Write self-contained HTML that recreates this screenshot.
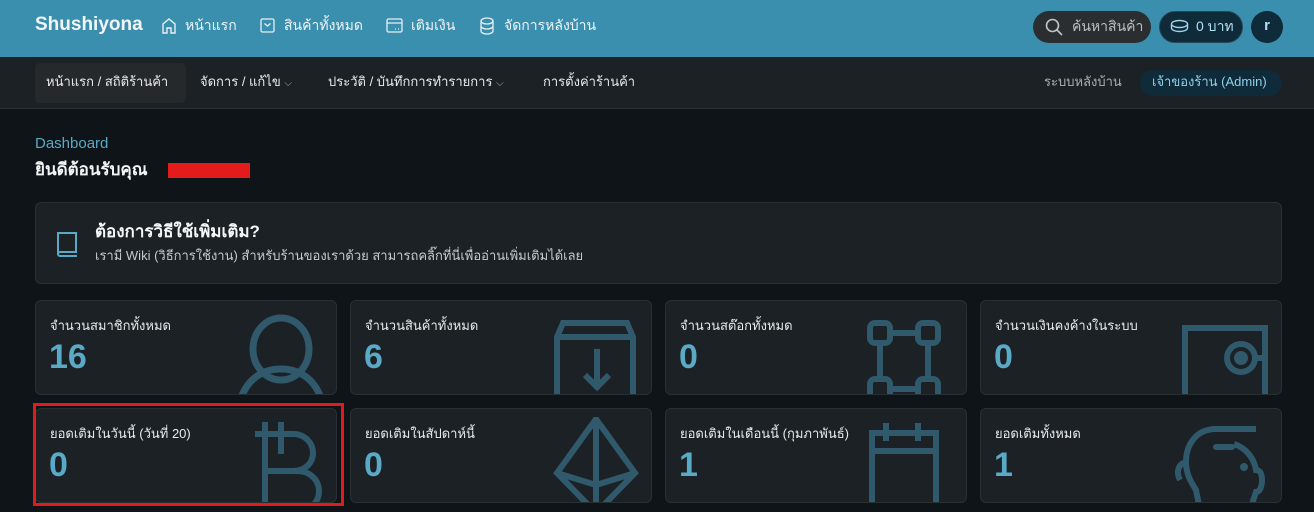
<!DOCTYPE html>
<html><head><meta charset="utf-8"><style>
*{box-sizing:border-box;margin:0;padding:0}
body{width:1314px;height:512px;overflow:hidden;background:#0e1417;font-family:"Liberation Sans","Noto Sans CJK SC",sans-serif;color:#e6e9ea;position:relative;line-height:20px}
.top{position:absolute;left:0;top:0;width:1314px;height:57px;background:#3a8fae}
.abs{position:absolute;white-space:nowrap;line-height:20px}
.nav2{position:absolute;left:0;top:57px;width:1314px;height:52px;background:#1b2124;border-bottom:1px solid #2a3134}
.card{position:absolute;background:#1b2124;border:1px solid #283034;border-radius:6px;overflow:hidden}
.lbl{position:absolute;left:14px;top:15px;font-size:13px;line-height:20px;color:#e8eaeb;white-space:nowrap}
.num{position:absolute;left:13px;top:38px;font-size:34px;line-height:36px;font-weight:bold;color:#5aa9c6}
.ic{position:absolute}
</style></head><body>
<div class="top"></div>
<div class="abs" style="left:35px;top:15px;font-size:19px;font-weight:bold;color:#f2f6f8">Shushiyona</div>
<svg class="abs" style="left:161px;top:17px" width="16" height="18" viewBox="0 0 16 18" fill="none" stroke="#e8f0f3" stroke-width="1.4"><path d="M2 16V7l6-5 6 5v9H10v-5H6v5z"/></svg>
<div class="abs" style="left:185px;top:15px;font-size:14px;color:#eef4f6">หน้าแรก</div>
<svg class="abs" style="left:260px;top:18px" width="15" height="15" viewBox="0 0 15 15" fill="none" stroke="#e8f0f3" stroke-width="1.3"><rect x="1" y="1" width="13" height="13" rx="1.5"/><path d="M4.5 5.5l3 2.5 3-2.5"/></svg>
<div class="abs" style="left:284px;top:15px;font-size:14px;color:#eef4f6">สินค้าทั้งหมด</div>
<svg class="abs" style="left:386px;top:18px" width="17" height="15" viewBox="0 0 17 15" fill="none" stroke="#e8f0f3" stroke-width="1.3"><rect x="1" y="1" width="15" height="13" rx="1.5"/><path d="M1 5h15M9 11h1M12 11h1"/></svg>
<div class="abs" style="left:411px;top:15px;font-size:14px;color:#eef4f6">เติมเงิน</div>
<svg class="abs" style="left:480px;top:17px" width="14" height="18" viewBox="0 0 14 18" fill="none" stroke="#e8f0f3" stroke-width="1.3"><ellipse cx="7" cy="4" rx="6" ry="3"/><path d="M1 4v10c0 1.7 2.7 3 6 3s6-1.3 6-3V4M1 9c0 1.7 2.7 3 6 3s6-1.3 6-3"/></svg>
<div class="abs" style="left:504px;top:15px;font-size:14px;color:#eef4f6">จัดการหลังบ้าน</div>
<div class="abs" style="left:1033px;top:11px;width:118px;height:32px;border-radius:16px;background:#2a2e30"></div>
<svg class="abs" style="left:1045px;top:18px" width="18" height="18" viewBox="0 0 18 18" fill="none" stroke="#bfc6c9" stroke-width="1.6"><circle cx="7.5" cy="7.5" r="6"/><path d="M12 12l5 5"/></svg>
<div class="abs" style="left:1072px;top:16px;font-size:14px;color:#b9c0c3">ค้นหาสินค้า</div>
<div class="abs" style="left:1159px;top:11px;width:84px;height:32px;border-radius:16px;background:#0f2a38;border:1px solid #22485a"></div>
<svg class="abs" style="left:1170px;top:19px" width="19" height="14" viewBox="0 0 19 14" fill="none" stroke="#9fd3e8" stroke-width="1.4"><ellipse cx="9.5" cy="5" rx="8" ry="3.5"/><path d="M1.5 5v4c0 2 3.6 3.5 8 3.5s8-1.5 8-3.5V5"/></svg>
<div class="abs" style="left:1196px;top:16px;font-size:14px;color:#aee0f3">0 บาท</div>
<div class="abs" style="left:1251px;top:11px;width:32px;height:32px;border-radius:50%;background:#0f2a38;color:#aee0f3;font-size:15px;font-weight:bold;text-align:center;line-height:30px">r</div>

<div class="nav2"></div>
<div class="abs" style="left:35px;top:63px;width:151px;height:40px;border-radius:5px;background:#26292b"></div>
<div class="abs" style="left:46px;top:72px;font-size:13px;color:#e8eaeb">หน้าแรก / สถิติร้านค้า</div>
<div class="abs" style="left:200px;top:72px;font-size:13px;color:#e8eaeb">จัดการ / แก้ไข <span style="color:#aaa;font-size:10px">⌵</span></div>
<div class="abs" style="left:328px;top:72px;font-size:13px;color:#e8eaeb">ประวัติ / บันทึกการทำรายการ <span style="color:#aaa;font-size:10px">⌵</span></div>
<div class="abs" style="left:543px;top:72px;font-size:13px;color:#e8eaeb">การตั้งค่าร้านค้า</div>
<div class="abs" style="left:1044px;top:72px;font-size:13px;color:#aab0b3">ระบบหลังบ้าน</div>
<div class="abs" style="left:1140px;top:70px;width:142px;height:26px;border-radius:13px;background:#0f2a38"></div>
<div class="abs" style="left:1152px;top:72px;font-size:13px;color:#8fd0ea">เจ้าของร้าน (Admin)</div>

<div class="abs" style="left:35px;top:134px;font-size:15px;color:#5aa9c6">Dashboard</div>
<div class="abs" style="left:35px;top:160px;font-size:17px;font-weight:bold;color:#f2f4f5">ยินดีต้อนรับคุณ</div>
<div class="abs" style="left:168px;top:163px;width:82px;height:15px;background:#e31b1b"></div>

<div class="card" style="left:35px;top:202px;width:1247px;height:82px"></div>
<svg class="abs" style="left:56px;top:230px" width="22" height="27" viewBox="0 0 22 27" fill="none" stroke="#5aa9c6" stroke-width="2"><path d="M2 24V3h18v19H4a2 2 0 0 0 0 4h17"/></svg>
<div class="abs" style="left:95px;top:222px;font-size:17px;font-weight:bold;color:#f5f6f7">ต้องการวิธีใช้เพิ่มเติม?</div>
<div class="abs" style="left:95px;top:246px;font-size:13px;color:#c5cacc">เรามี Wiki (วิธีการใช้งาน) สำหรับร้านของเราด้วย สามารถคลิ๊กที่นี่เพื่ออ่านเพิ่มเติมได้เลย</div>

<!-- row 1 -->
<div class="card" style="left:35px;top:300px;width:302px;height:95px">
<div class="lbl">จำนวนสมาชิกทั้งหมด</div><div class="num">16</div>
<svg class="ic" style="left:195px;top:10px" width="100" height="90" viewBox="0 0 100 90" fill="none" stroke="#30596b" stroke-width="7"><ellipse cx="50" cy="38" rx="28" ry="31"/><path d="M8 95c5-25 22-37 42-37s37 12 42 37"/></svg></div>
<div class="card" style="left:350px;top:300px;width:302px;height:95px">
<div class="lbl">จำนวนสินค้าทั้งหมด</div><div class="num">6</div>
<svg class="ic" style="left:200px;top:18px" width="90" height="80" viewBox="0 0 90 80" fill="none" stroke="#30596b" stroke-width="6"><path d="M6 80V18L12 4h64l6 14v62M6 18h76M46 30v40M34 56l12 12 12-12"/></svg></div>
<div class="card" style="left:665px;top:300px;width:302px;height:95px">
<div class="lbl">จำนวนสต๊อกทั้งหมด</div><div class="num">0</div>
<svg class="ic" style="left:200px;top:18px" width="90" height="80" viewBox="0 0 90 80" fill="none" stroke="#30596b" stroke-width="6"><rect x="4" y="4" width="20" height="20" rx="5"/><rect x="52" y="4" width="20" height="20" rx="5"/><rect x="4" y="60" width="20" height="30" rx="5"/><rect x="52" y="60" width="20" height="30" rx="5"/><path d="M24 14h28M14 24v36M62 24v36M24 70h28"/></svg></div>
<div class="card" style="left:980px;top:300px;width:302px;height:95px">
<div class="lbl">จำนวนเงินคงค้างในระบบ</div><div class="num">0</div>
<svg class="ic" style="left:200px;top:22px" width="90" height="80" viewBox="0 0 90 80" fill="none" stroke="#30596b" stroke-width="6"><path d="M4 80V5h80v75"/><circle cx="60" cy="35" r="14"/><circle cx="60" cy="35" r="4" fill="#30596b"/><path d="M74 35h10"/></svg></div>

<!-- row 2 -->
<div class="card" style="left:35px;top:408px;width:302px;height:95px">
<div class="lbl">ยอดเติมในวันนี้ (วันที่ 20)</div><div class="num">0</div>
<svg class="ic" style="left:213px;top:-5px" width="80" height="110" viewBox="0 0 80 110" fill="none" stroke="#30596b" stroke-width="6"><path d="M16 50V18M32 50V18M6 30h38c12 0 20 9 20 19s-8 18-20 18H16V30M16 67h32c14 0 22 10 22 20s-8 21-22 21H16V67"/></svg></div>
<div class="card" style="left:350px;top:408px;width:302px;height:95px">
<div class="lbl">ยอดเติมในสัปดาห์นี้</div><div class="num">0</div>
<svg class="ic" style="left:200px;top:8px" width="90" height="90" viewBox="0 0 90 90" fill="none" stroke="#30596b" stroke-width="6"><path d="M45 2L6 56l39 40 39-40zM45 2v90M6 56l39 12 39-12"/></svg></div>
<div class="card" style="left:665px;top:408px;width:302px;height:95px">
<div class="lbl">ยอดเติมในเดือนนี้ (กุมภาพันธ์)</div><div class="num">1</div>
<svg class="ic" style="left:200px;top:10px" width="90" height="90" viewBox="0 0 90 90" fill="none" stroke="#30596b" stroke-width="6"><path d="M6 90V14h64v76M6 32h64M20 4v18M52 4v18"/></svg></div>
<div class="card" style="left:980px;top:408px;width:302px;height:95px">
<div class="lbl">ยอดเติมทั้งหมด</div><div class="num">1</div>
<svg class="ic" style="left:185px;top:8px" width="110" height="90" viewBox="0 0 110 90" fill="none" stroke="#30596b" stroke-width="6"><path d="M90 12H50C30 12 20 28 20 45c0 12 5 20 10 28l4 20M84 93l6-18c4 0 6-6 6-12s-2-10-6-10c-2-12-10-22-22-26M20 45c-8 2-10 10-6 18"/><path d="M50 30h16" stroke-linecap="round"/><circle cx="78" cy="50" r="4" fill="#30596b" stroke="none"/></svg></div>

<div class="abs" style="left:33px;top:403px;width:311px;height:103px;border:3px solid #e01b1b"></div>
</body></html>
